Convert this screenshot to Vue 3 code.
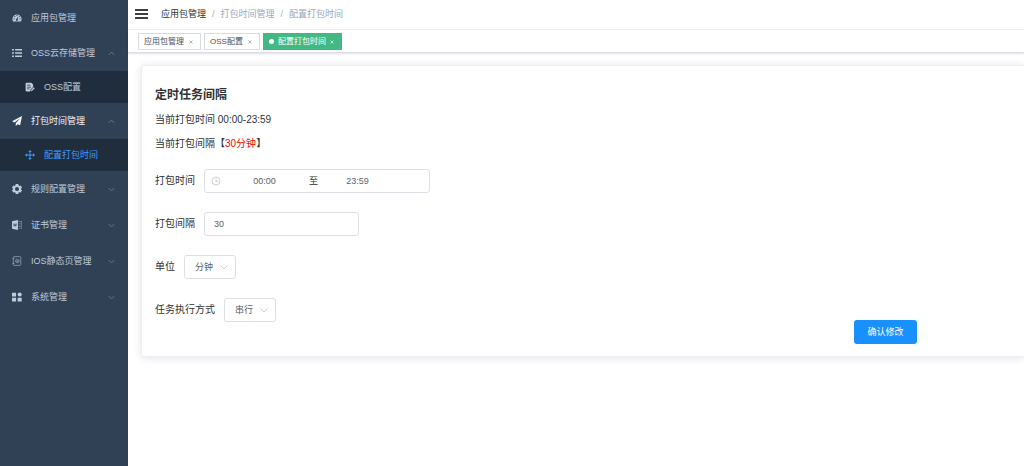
<script setup>
import { ref } from 'vue'

const menu = ref([
  { label: '应用包管理', icon: 'dashboard' },
  { label: 'OSS云存储管理', icon: 'list', open: true, children: [{ label: 'OSS配置', icon: 'form' }] },
  { label: '打包时间管理', icon: 'plane', open: true, current: true, children: [{ label: '配置打包时间', icon: 'move', active: true }] },
  { label: '规则配置管理', icon: 'gear', children: [] },
  { label: '证书管理', icon: 'word', children: [] },
  { label: 'IOS静态页管理', icon: 'page', children: [] },
  { label: '系统管理', icon: 'grid', children: [] },
])
const icons = {
  dashboard: '<path fill-rule="evenodd" d="M1.5 13A7.3 7.3 0 1 1 14.5 13Q14.2 13.6 13.5 13.6H2.5Q1.8 13.6 1.5 13ZM7.2 3.2v1.6h1.6V3.2ZM3.8 4.6v1.6h1.6V4.6ZM10.8 4.6v1.6h1.6V4.6ZM2.4 8.2v1.6H4V8.2ZM12 8.2v1.6h1.6V8.2ZM8.4 6.2 7.6 9.2a1.7 1.7 0 1 0 1.3.3l.6-3Z"/>',
  list: '<path d="M0 1.5h3v2.4H0zM5 1.5h11v2.4H5zM0 6.8h3v2.4H0zM5 6.8h11v2.4H5zM0 12.1h3v2.4H0zM5 12.1h11v2.4H5z"/>',
  form: '<path fill-rule="evenodd" d="M2.5 1H10l3 3v4L9 12l-.6 3H2.5Q1 15 1 13.5V2.5Q1 1 2.5 1ZM3.5 4.5v1.2h5V4.5ZM3.5 7.5v1.2h6V7.5ZM3.5 10.5v1.2h3.5v-1.2Z"/><path d="m10 12.5 4-4 1.6 1.6-4 4-2.1.5Z"/>',
  plane: '<path d="M16 0 0 8.500l4 2L13 3.500 6 11.500V16l3-3 4 1.800Z"/>',
  move: '<path d="M8 0 5.300 3.200h2v4.100H3.200v-2L0 8l3.200 2.700v-2h4.100v4.100h-2L8 16l2.700-3.200h-2V8.700h4.100v2L16 8l-3.200-2.700v2H8.700V3.200h2Z"/>',
  gear: '<path fill-rule="evenodd" d="M6 0h4l.6 2.300 1.200.7L14 2.400 16 6l-1.700 1.500v1L16 10l-2 3.600-2.200-.6-1.200.7L10 16H6l-.6-2.300L4.200 13 2 13.600 0 10l1.700-1.500v-1L0 6l2-3.600 2.200.6 1.200-.7ZM8 4.800a3.200 3.200 0 1 0 0 6.400 3.200 3.200 0 0 0 0-6.400Z"/>',
  word: '<path fill-rule="evenodd" d="M0 2 9.500 0v16L0 14ZM2 5.500l1 5h1l.8-3 .8 3h1l1-5H6.500L6 8.600 5.300 5.500h-1L3.600 8.600 3 5.500Z"/><path opacity="0.6" d="M10.500 2H16v12h-5.500v-1H15V3h-4.500zM10.500 5H14v1h-3.500zM10.500 7.500H14v1h-3.500zM10.500 10H14v1h-3.500z"/>',
  page: '<g fill="none" stroke="currentColor" stroke-width="1.100" opacity="0.8"><rect x="2" y="1" width="12" height="14" rx="1.500"/><path d="M1 4h3M1 12h3"/><circle cx="8.500" cy="8" r="2.700"/><path d="M5 8h1M11 8h1"/></g><circle cx="8.500" cy="8" r="1"/>',
  grid: '<path d="M0 1h6.500v6H0zM0 9h6.500v6H0zM9 9h6.500v6H9z"/><circle cx="12.300" cy="4" r="3.300"/>',
}
const tags = ref([
  { label: '应用包管理' },
  { label: 'OSS配置' },
  { label: '配置打包时间', active: true },
])
const start = ref('00:00')
const end = ref('23:59')
const interval = ref('30')
const unit = ref('分钟')
const mode = ref('串行')
const closeTag = (i) => tags.value.splice(i, 1)
</script>

<template>
  <div class="app">
    <nav class="sidebar">
      <ul class="menu">
        <li v-for="item in menu" :key="item.label">
          <button type="button" class="item" :class="{ current: item.current }" @click="item.open = !item.open">
            <svg class="icon" viewBox="0 0 16 16" v-html="icons[item.icon]"></svg>
            <span class="label">{{ item.label }}</span>
            <svg v-if="item.children" class="arrow" :class="{ up: item.open }" viewBox="0 0 8 8"><path d="M1 2.500 4 5.500 7 2.500" /></svg>
          </button>
          <ul v-if="item.open && item.children" class="submenu">
            <li v-for="sub in item.children" :key="sub.label">
              <a href="#" class="subitem" :class="{ active: sub.active }">
                <svg class="icon" viewBox="0 0 16 16" v-html="icons[sub.icon]"></svg>
                <span>{{ sub.label }}</span>
              </a>
            </li>
          </ul>
        </li>
      </ul>
    </nav>

    <div class="main">
      <header class="navbar">
        <button type="button" class="hamburger" aria-label="菜单">
          <svg viewBox="0 0 13 10"><path d="M0 1h13M0 5h13M0 9h13" /></svg>
        </button>
        <nav class="breadcrumb">
          <a href="#">应用包管理</a><i>/</i><span>打包时间管理</span><i>/</i><span>配置打包时间</span>
        </nav>
      </header>

      <div class="tags">
        <div v-for="(tag, i) in tags" :key="tag.label" class="tag" :class="{ active: tag.active }">
          <a href="#">{{ tag.label }}</a>
          <button type="button" aria-label="关闭" @click="closeTag(i)">
            <svg viewBox="0 0 4 4"><path d="M0.500 0.500l3 3M3.500 0.500l-3 3" /></svg>
          </button>
        </div>
      </div>

      <main class="content">
        <form class="card" @submit.prevent>
          <h1>定时任务间隔</h1>
          <p>当前打包时间 00:00-23:59</p>
          <p>当前打包间隔【<b>30分钟</b>】</p>
          <div class="rows">
            <div class="row">
              <label for="start">打包时间</label>
              <div class="box range">
                <svg viewBox="0 0 10 10"><circle cx="5" cy="5" r="4" /><path d="M5 2.500V5.300H7.200" /></svg>
                <input id="start" v-model="start" />
                <span>至</span>
                <input v-model="end" aria-label="结束时间" />
              </div>
            </div>
            <div class="row">
              <label for="interval">打包间隔</label>
              <input id="interval" v-model="interval" class="box number" />
            </div>
            <div class="row">
              <label for="unit">单位</label>
              <div class="box select">
                <select id="unit" v-model="unit"><option>分钟</option><option>小时</option></select>
                <svg viewBox="0 0 8 8"><path d="M0.500 2.500 4 6 7.500 2.500" /></svg>
              </div>
            </div>
            <div class="row">
              <label for="mode">任务执行方式</label>
              <div class="box select">
                <select id="mode" v-model="mode"><option>串行</option><option>并行</option></select>
                <svg viewBox="0 0 8 8"><path d="M0.500 2.500 4 6 7.500 2.500" /></svg>
              </div>
            </div>
          </div>
          <div class="actions"><button type="submit">确认修改</button></div>
        </form>
      </main>
    </div>
  </div>
</template>

<style>
body {
  margin: 0;
}
</style>

<style scoped>
* {
  box-sizing: border-box;
}
.app {
  display: flex;
  min-height: 100vh;
  font: 9px/12px "Liberation Sans", "Noto Sans CJK SC", sans-serif;
  color: #303133;
  background: #fff;
}
button, input, select {
  font: inherit;
  color: inherit;
  border: 0;
  padding: 0;
  background: none;
  outline: none;
}
button {
  cursor: pointer;
}
a {
  color: inherit;
  text-decoration: none;
}
ul {
  list-style: none;
  margin: 0;
  padding: 0;
}
.sidebar {
  flex: none;
  width: 128px;
  background: #304156;
  color: #bfcbd9;
}
.item, .subitem {
  display: flex;
  align-items: center;
  width: 100%;
  height: 36px;
  padding: 0 13px 0 12px;
  text-align: left;
}
.menu > li:first-child .item {
  height: 35px;
}
.item.current {
  color: #f4f4f5;
}
.icon {
  flex: none;
  width: 10px;
  height: 10px;
  margin-right: 9px;
  fill: currentColor;
}
.label {
  flex: 1;
}
.arrow {
  width: 7px;
  height: 7px;
  fill: none;
  stroke: #74818f;
  stroke-width: 1;
}
.arrow.up {
  transform: rotate(180deg);
}
.subitem {
  height: 32px;
  padding-left: 25px;
  background: #1f2d3d;
}
.subitem.active {
  color: #409eff;
}
.main {
  flex: 1;
  min-width: 0;
}
.navbar {
  display: flex;
  align-items: center;
  height: 30px;
  padding: 0 7px 2px;
  border-bottom: 1px solid #f0f1f3;
}
.hamburger {
  width: 13px;
  height: 10px;
  margin-right: 13px;
}
.hamburger svg {
  display: block;
  stroke: #000;
  stroke-width: 1.6;
}
.breadcrumb {
  color: #97a8be;
}
.breadcrumb a {
  color: #303133;
}
.breadcrumb i {
  margin: 0 6px;
  font-style: normal;
  color: #a5abb5;
}
.tags {
  display: flex;
  gap: 3px;
  height: 23px;
  padding: 3px 10px 0;
  border-bottom: 1px solid #d8dce5;
  box-shadow: 0 1px 2px rgba(0, 0, 0, 0.12);
  font-size: 8px;
}
.tag {
  display: flex;
  align-items: center;
  gap: 5px;
  height: 17px;
  padding: 0 7px 0 5px;
  border: 1px solid #d8dce5;
  color: #495060;
}
.tag button {
  width: 4px;
  height: 4px;
}
.tag svg {
  display: block;
  stroke: #8d929c;
  stroke-width: 0.7;
}
.tag.active {
  gap: 4px;
  background: #42b983;
  border-color: #42b983;
  color: #fff;
}
.tag.active::before {
  content: "";
  width: 5px;
  height: 5px;
  border-radius: 50%;
  background: #fff;
}
.tag.active svg {
  stroke: #fff;
}
.content {
  padding: 12px 0 12px 13px;
}
.card {
  padding: 20px 13px 12px;
  border: 1px solid #ebeef5;
  border-right: 0;
  border-radius: 3px 0 0 3px;
  box-shadow: 0 1px 8px rgba(0, 0, 0, 0.12);
  font-size: 10px;
}
h1 {
  margin: 0 0 4px;
  font-size: 12px;
  line-height: 18px;
}
p {
  margin: 0;
  line-height: 24px;
}
p b {
  font-weight: 400;
  color: #f00;
}
.rows {
  display: grid;
  gap: 19px;
  margin-top: 13px;
}
.row {
  display: flex;
  align-items: center;
  gap: 9px;
}
.box {
  height: 24px;
  border: 1px solid #dcdfe6;
  border-radius: 3px;
  font-size: 9px;
  color: #606266;
}
.box svg {
  flex: none;
  fill: none;
  stroke: #c0c4cc;
  stroke-width: 0.8;
}
.range {
  display: flex;
  align-items: center;
  width: 226px;
  padding: 0 6px;
}
.range svg {
  width: 10px;
  height: 10px;
  margin-right: 4px;
}
.range input {
  width: 79px;
  text-align: center;
}
.range span {
  padding-left: 5px;
  color: #303133;
}
.number {
  width: 155px;
  padding: 0 9px;
}
.select {
  display: flex;
  align-items: center;
  width: 52px;
  padding: 0 7px 0 10px;
}
.select select {
  flex: 1;
  min-width: 0;
  appearance: none;
}
.select svg {
  width: 8px;
  height: 8px;
}
.actions {
  display: flex;
  justify-content: flex-end;
  margin-top: -2px;
  padding-right: 94px;
}
.actions button {
  width: 63px;
  height: 24px;
  border-radius: 3px;
  background: #1890ff;
  color: #fff;
  font-size: 9px;
}
</style>
